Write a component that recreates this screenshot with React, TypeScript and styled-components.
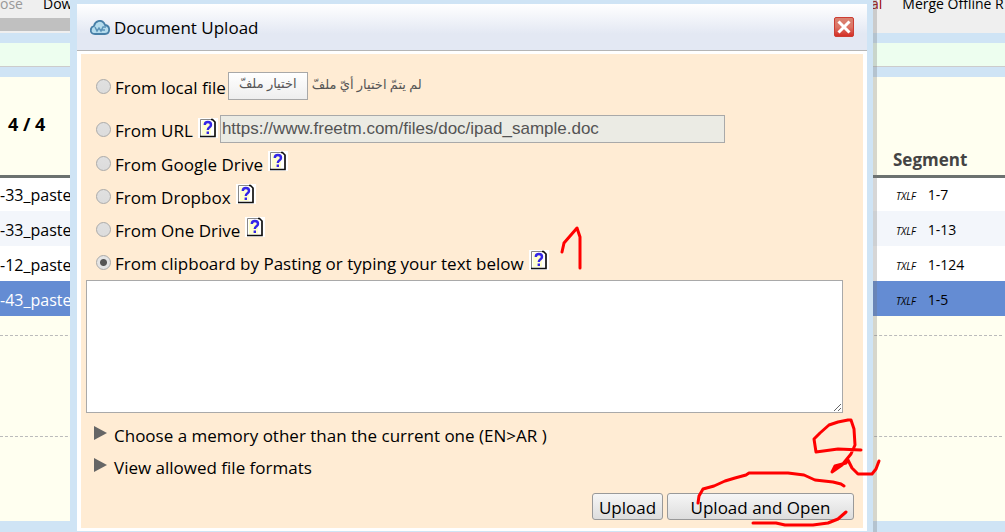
import React from "react";
import styled, { createGlobalStyle, css } from "styled-components";

const Global = createGlobalStyle`
  * { box-sizing: border-box; }
  body {
    margin: 0;
    background: #cfe4f5;
    color: #000;
    font: 17px/24px "Open Sans", "Noto Sans", sans-serif;
  }
`;

const Page = styled.div`
  position: relative;
  min-height: 100vh;
  overflow: hidden;
`;

const Toolbar = styled.nav`
  display: flex;
  justify-content: space-between;
  height: 33px;
  padding-bottom: 17px;
  background: #efefef;
  font-size: 14px;
  line-height: 24px;
  align-items: flex-end;
  overflow: hidden;
`;

const ToolGroup = styled.div<{ $end?: boolean }>`
  display: flex;
  gap: 20px;
  width: ${(p) => (p.$end ? "134px" : "auto")};
  white-space: nowrap;
`;

const ToolButton = styled.button<{ $dim?: boolean; $accent?: boolean }>`
  padding: 0;
  border: 0;
  background: none;
  font: inherit;
  white-space: nowrap;
  color: ${(p) => (p.$dim ? "#999" : p.$accent ? "#900" : "#000")};
`;

const Scrollbar = styled.div`
  width: 50%;
  height: 13px;
  margin-top: -15px;
  margin-bottom: 12px;
  background: #c0c0c0;
`;

const GreenBar = styled.div`
  height: 24px;
  background: #edfeef;
  border-bottom: 1px solid #ccc;
`;

const Panel = styled.main`
  margin-top: 10px;
  padding-bottom: 84px;
  background: #fffff0;
`;

const Counter = styled.div`
  height: 66px;
  padding: 35px 8px 0;
  font: bold 18px/24px "Open Sans", sans-serif;
`;

const FileTable = styled.table`
  width: 100%;
  table-layout: fixed;
  border-collapse: collapse;
`;

const HeadCell = styled.th<{ $narrow?: boolean }>`
  width: ${(p) => (p.$narrow ? "122px" : "auto")};
  height: 33px;
  padding: 2px 10px 0;
  border-bottom: 3px solid #6c7270;
  text-align: left;
  color: #444;
  line-height: 24px;
`;

const FileRow = styled.tr<{ $selected?: boolean }>`
  height: 35px;
  background: #fff;
  &:nth-child(even) { background: #f3f6fb; }
  ${(p) => p.$selected && css`&&& { background: #648cd3; } td:first-child { color: #fff; }`}
`;

const NameCell = styled.td`
  padding: 2px 0 0;
  font-size: 16px;
`;

const SegmentCell = styled.td`
  padding: 3px 13px 0;
  font-size: 14px;
  white-space: nowrap;
`;

const Format = styled.i`
  margin-right: 12px;
  font-size: 10px;
`;

const Divider = styled.hr<{ $gap: number }>`
  margin: ${(p) => p.$gap}px 3px 0 0;
  border: 0;
  border-top: 1px dashed #bbb;
`;

const Dialog = styled.section`
  position: absolute;
  top: 0;
  left: 70px;
  right: 132px;
  padding: 4px 6px 1px 7px;
  background: #cfe4f5;
  box-shadow: 4px 0 0 rgba(120, 120, 120, 0.3);
`;

const DialogHead = styled.header`
  display: flex;
  align-items: center;
  gap: 4px;
  height: 47px;
  padding: 0 13px;
  border-bottom: 1px solid #b5b5b5;
  background: linear-gradient(#fff, #e3e8f3 65%);
`;

const Title = styled.h1`
  flex: 1;
  margin: 0;
  padding-top: 2px;
  font-size: 17px;
  font-weight: 400;
`;

const CloseButton = styled.button`
  display: flex;
  padding: 0;
  border: 0;
  background: none;
`;

const DialogBody = styled.form`
  padding: 12px 9px 8px 5px;
  border: solid #fff;
  border-width: 3px 4px;
  background: #ffecd4;
`;

const SourceRow = styled.div<{ $height?: number; $top?: number }>`
  display: flex;
  align-items: center;
  height: ${(p) => p.$height ?? 33}px;
  padding-top: ${(p) => p.$top ?? 0}px;
  padding-left: 10px;
`;

const Radio = styled.input`
  appearance: none;
  width: 15px;
  height: 15px;
  margin: 0 4px 3px 0;
  border: 1px solid #aaa;
  border-radius: 50%;
  background: linear-gradient(#e0e0e0, #dcdcdc);
  &:checked {
    background: radial-gradient(circle, #555 3px, #e4e4e4 4px);
  }
`;

const HelpButton = styled.button`
  display: flex;
  margin: 0 2px 7px 5px;
  padding: 0;
  border: 0;
  background: none;
`;

const FileButton = styled.button`
  width: 80px;
  height: 28px;
  margin: 0 4px 4px 2px;
  padding: 0 0 4px;
  border: 1px solid #a8a8a8;
  background: linear-gradient(#fff, #eee);
  color: #555;
  font: 13px/20px "Liberation Serif", "DejaVu Sans", serif;
`;

const FileStatus = styled.span`
  padding-bottom: 6px;
  color: #555;
  font: 13px/20px "Liberation Serif", "DejaVu Sans", serif;
`;

const UrlInput = styled.input`
  width: 505px;
  height: 28px;
  margin: 0 0 4px;
  padding: 0 1px;
  border: 1px solid #a9a9a9;
  background: #ebebe4;
  color: #545454;
  font: 17px "Liberation Sans", sans-serif;
`;

const PasteArea = styled.textarea`
  display: block;
  width: calc(100% - 11px);
  height: 133px;
  border: 1px solid #a9a9a9;
  background: #fff;
`;

const Disclosure = styled.button`
  display: flex;
  align-items: center;
  gap: 7px;
  height: 32px;
  padding: 0 8px;
  border: 0;
  background: none;
  color: #000;
  font: inherit;
  svg { margin-bottom: 6px; }
`;

const Disclosures = styled.div`
  padding-top: 7px;
`;

const Actions = styled.div`
  display: flex;
  justify-content: flex-end;
  gap: 4px;
  margin-top: 9px;
`;

const ActionButton = styled.button<{ $wide?: boolean }>`
  width: ${(p) => (p.$wide ? "187px" : "71px")};
  height: 27px;
  padding: 2px 0 0;
  border: 1px solid #999;
  border-radius: 3px;
  background: linear-gradient(#f6f6f6, #ddd);
  color: #000;
  font: inherit;
`;

const Ink = styled.svg`
  position: absolute;
  top: 0;
  right: 0;
  pointer-events: none;
`;

function CloudIcon() {
  return (
    <svg width="20" height="15" viewBox="0 0 20 15" aria-hidden="true">
      <path d="M5 14C-1 14 0 7 4 6C5 1 11-1 14 3L15 5C21 6 20 14 15 14Z" fill="#b5dced" stroke="#477fa7" strokeWidth="1.8" />
      <path d="M5 7L7 11L9 8L11 11L13 7H16M12 10H15" fill="none" stroke="#5b93b8" strokeWidth="1.5" />
    </svg>
  );
}

function CloseIcon() {
  return (
    <svg width="20" height="20" viewBox="0 0 20 20" aria-hidden="true">
      <defs>
        <linearGradient id="closeFill" x1="0" y1="0" x2="0" y2="1">
          <stop offset="0" stopColor="#d98372" />
          <stop offset="0.5" stopColor="#dc7566" />
          <stop offset="1" stopColor="#d42a22" />
        </linearGradient>
      </defs>
      <rect x="0.5" y="0.5" width="19" height="19" rx="1.5" fill="url(#closeFill)" stroke="#cc3d33" />
      <path d="M4.5 4.5L15.5 15.5M15.5 4.5L4.5 15.5" stroke="#fff" strokeWidth="3" />
    </svg>
  );
}

function Help({ topic }: { topic: string }) {
  return (
    <HelpButton type="button" aria-label={`Help: ${topic}`}>
      <svg width="20" height="20" viewBox="0 0 20 20" aria-hidden="true">
        <path d="M0 0H20V20H0Z" fill="#fff" />
        <path d="M2.5 1.5H14L17 4V18.5H2.5Z" fill="#fff" stroke="#888" />
        <path d="M4 3H13V17H4Z" fill="#ffffd0" />
        <path d="M13 1.5H14.5L17 4V18.5H2" fill="none" stroke="#111" strokeWidth="1.6" />
        <path d="M6.8 7C6.8 3 13 3 13 7C13 9.5 9.8 9 9.8 12M9.8 13.5V16" fill="none" stroke="#3426e8" strokeWidth="2.4" />
      </svg>
    </HelpButton>
  );
}

function Triangle() {
  return (
    <svg width="13" height="14" viewBox="0 0 13 14" aria-hidden="true">
      <path d="M0 0L13 7L0 14Z" fill="#666" />
    </svg>
  );
}

const files = [
  { name: "-33_paste", segment: "1-7" },
  { name: "-33_paste", segment: "1-13" },
  { name: "-12_paste", segment: "1-124" },
  { name: "-43_paste", segment: "1-5", selected: true },
];

const cloudSources = [
  { id: "google", label: "From Google Drive" },
  { id: "dropbox", label: "From Dropbox" },
  { id: "onedrive", label: "From One Drive" },
  { id: "clipboard", label: "From clipboard by Pasting or typing your text below" },
];

export default function App() {
  return (
    <Page>
      <Global />
      <Toolbar>
        <ToolGroup>
          <ToolButton $dim>ose</ToolButton>
          <ToolButton>Dow</ToolButton>
        </ToolGroup>
        <ToolGroup $end>
          <ToolButton $accent>al</ToolButton>
          <ToolButton>Merge Offline R</ToolButton>
        </ToolGroup>
      </Toolbar>
      <Scrollbar />
      <GreenBar />
      <Panel>
        <Counter>4 / 4</Counter>
        <FileTable>
          <thead>
            <tr>
              <HeadCell />
              <HeadCell $narrow>Segment</HeadCell>
            </tr>
          </thead>
          <tbody>
            {files.map((f, i) => (
              <FileRow key={i} $selected={f.selected}>
                <NameCell>{f.name}</NameCell>
                <SegmentCell><Format>TXLF</Format>{f.segment}</SegmentCell>
              </FileRow>
            ))}
          </tbody>
        </FileTable>
        <Divider $gap={19} />
        <Divider $gap={100} />
      </Panel>

      <Dialog role="dialog" aria-labelledby="dialog-title">
        <DialogHead>
          <CloudIcon />
          <Title id="dialog-title">Document Upload</Title>
          <CloseButton type="button" aria-label="Close"><CloseIcon /></CloseButton>
        </DialogHead>
        <DialogBody>
          <SourceRow $height={44}>
            <Radio type="radio" name="source" id="local" />
            <label htmlFor="local">From local file</label>
            <FileButton type="button" dir="rtl">اختيار ملفّ</FileButton>
            <FileStatus dir="rtl">لم يتمّ اختيار أيّ ملفّ</FileStatus>
          </SourceRow>
          <SourceRow $height={38} $top={4}>
            <Radio type="radio" name="source" id="url" />
            <label htmlFor="url">From URL</label>
            <Help topic="From URL" />
            <UrlInput aria-label="Document URL" defaultValue="https://www.freetm.com/files/doc/ipad_sample.doc" />
          </SourceRow>
          {cloudSources.map((s) => (
            <SourceRow key={s.id}>
              <Radio type="radio" name="source" id={s.id} defaultChecked={s.id === "clipboard"} />
              <label htmlFor={s.id}>{s.label}</label>
              <Help topic={s.label} />
            </SourceRow>
          ))}
          <PasteArea aria-label="Text to upload" />
          <Disclosures>
            <Disclosure type="button"><Triangle />Choose a memory other than the current one (EN&gt;AR )</Disclosure>
            <Disclosure type="button"><Triangle />View allowed file formats</Disclosure>
          </Disclosures>
          <Actions>
            <ActionButton type="button">Upload</ActionButton>
            <ActionButton type="submit" $wide>Upload and Open</ActionButton>
          </Actions>
        </DialogBody>
      </Dialog>

      <Ink width="455" height="532" viewBox="550 0 455 532" fill="none" stroke="#f00" strokeWidth="3" strokeLinecap="round" strokeLinejoin="round" aria-hidden="true">
        <path d="M562 252L564 243L577 228L580 237V268" />
        <path d="M698 503L699 496L703 489L714 486L725 481L735 478L746 475L749 473H788L804 475L815 480L833 482L841 484L844 486" />
        <path d="M753 523H776L785 525H813L828 523L838 519L846 512" />
        <path d="M861 450L838 449L816 452L814 439L820 433L829 425L838 422L848 420H851L854 429L855 445L851 454L842 465L832 472L835 466L846 463L848 460L852 468L858 474H872L876 469L879 461" />
      </Ink>
    </Page>
  );
}
